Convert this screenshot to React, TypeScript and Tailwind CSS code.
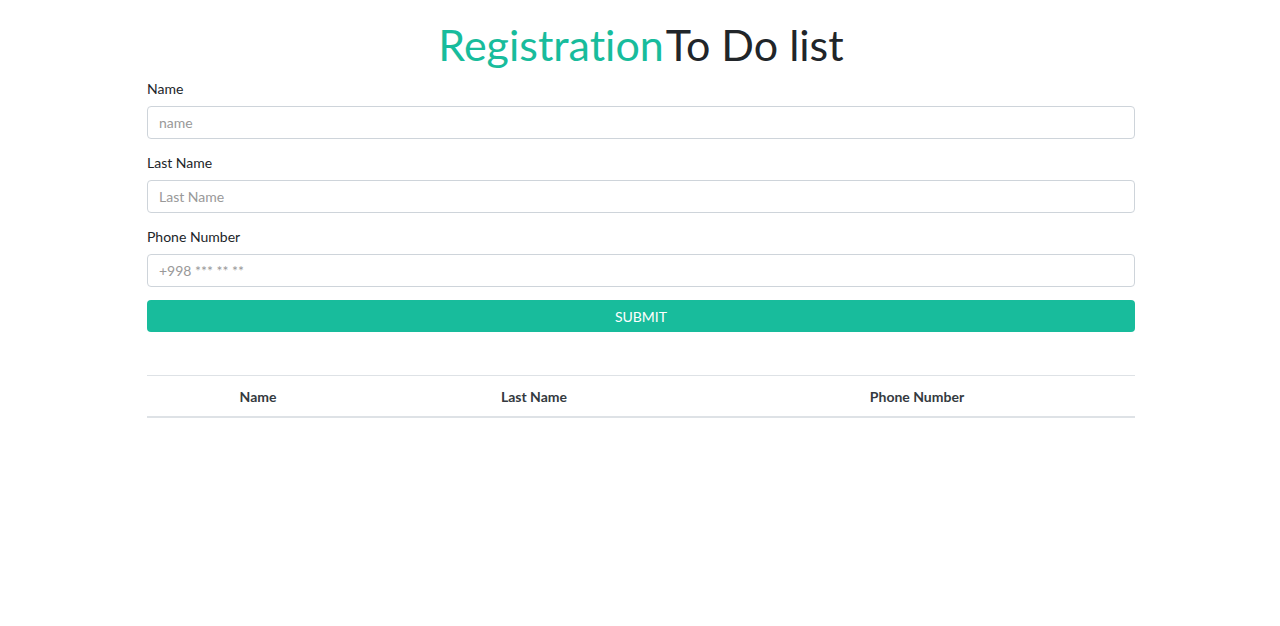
import React from "react";

export default function App() {
  const font = { fontFamily: "Lato, 'Noto Sans', sans-serif", fontVariantLigatures: "none" as const };
  return (
    <div className="min-h-[626px] w-full bg-white text-[#212529]" style={font}>
      <div className="mx-auto w-[990px] pl-[2px] pt-[21px]">
        <h1 className="text-center text-[43px] leading-[48px] font-normal mb-[9px]">
          <span className="text-[#18bc9c]">Registration</span>
          <span className="text-[#212529] ml-[2px]">To Do list</span>
        </h1>
        <form onSubmit={(e) => e.preventDefault()}>
          {[
            { label: "Name", ph: "name" },
            { label: "Last Name", ph: "Last Name" },
            { label: "Phone Number", ph: "+998 *** ** **" },
          ].map((f) => (
            <div key={f.label} className="mb-[13px]">
              <label className="block text-[14px] leading-[21px] mb-[7px]">{f.label}</label>
              <input
                className="block w-full h-[33px] rounded-[4px] border border-[#ced4da] px-[11px] text-[14px] text-[#495057] placeholder:text-[#999] outline-none"
                placeholder={f.ph}
              />
            </div>
          ))}
          <button
            type="submit"
            className="block w-full mt-[1px] h-[32px] rounded-[4px] bg-[#18bc9c] text-white text-[14px] uppercase"
          >
            Submit
          </button>
        </form>
        <div className="mt-[43px] border-t border-[#dee2e6] border-b-2 border-b-[#dee2e6] grid grid-cols-[222px_330px_436px] h-[43px] items-center text-[14px] font-bold text-center text-[#343a40]">
          <div>Name</div>
          <div>Last Name</div>
          <div>Phone Number</div>
        </div>
      </div>
    </div>
  );
}
